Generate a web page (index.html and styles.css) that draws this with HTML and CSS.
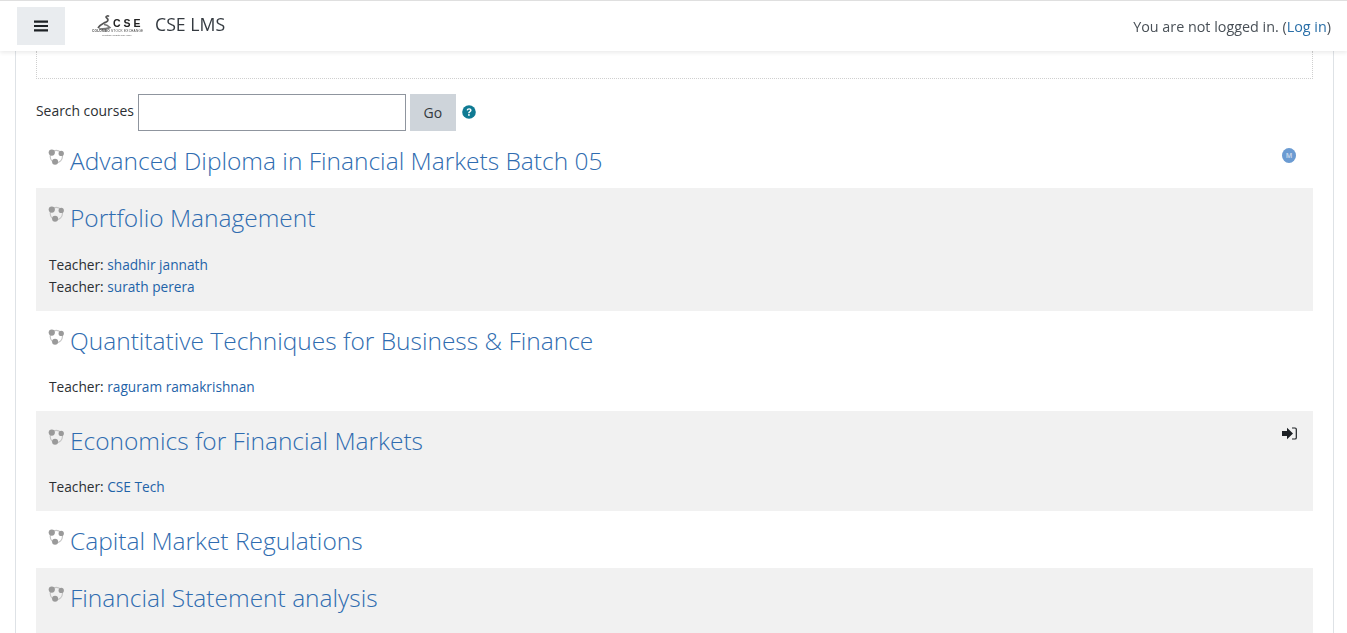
FILE: index.html
```html
<!DOCTYPE html>
<html lang="en">
<head>
<meta charset="utf-8">
<title>CSE LMS</title>
<link rel="stylesheet" href="styles.css">
</head>
<body>
<header class="navbar">
  <button class="menu-btn" aria-label="Menu">
    <svg width="14" height="12" viewBox="0 0 14 12"><path d="M0 0.500h14v2.200H0zM0 4.900h14v2.200H0zM0 9.300h14v2.200H0z" fill="#1d2125"/></svg>
  </button>
  <div class="brand">
    <div class="logo">
      <svg class="logo-mark" width="15" height="15" viewBox="0 0 15 15"><path d="M1 13c2-3 4-4 6-5 2-1 4-1 4-3S9 3 9 2s2-1.500 3-.5" fill="none" stroke="#555" stroke-width="1.700"/><path d="M2 14c3 0 8 0 11-1.500-2-2-4-3-6-3" fill="none" stroke="#777" stroke-width="1.500"/></svg>
      <span class="logo-cse">C S E</span>
      <span class="logo-sub"><b>COLOMBO</b> STOCK EXCHANGE</span>
      <span class="logo-tag">Creating Wealth and Value</span>
    </div>
    <span class="site-name">CSE LMS</span>
  </div>
  <div class="login-info">You are not logged in. (<a href="#">Log in</a>)</div>
</header>

<main class="page">
  <div class="dotted-box"></div>
  <form class="search">
    <label class="search-label">Search courses</label>
    <input class="search-input" type="text">
    <button class="go-btn" type="button">Go</button>
    <svg class="help" width="14" height="14" viewBox="0 0 14 14"><circle cx="7" cy="7" r="6.800" fill="#0f7a93"/><path d="M4.600 5.300C4.800 3.900 5.800 3.200 7.100 3.200c1.400 0 2.500.8 2.500 2 0 1.900-2 1.800-2 3.100H6.100c0-2 2-2 2-3 0-.5-.4-.8-1-.8-.6 0-1 .3-1.200 1z" fill="#fff"/><rect x="6.100" y="9.100" width="1.600" height="1.700" fill="#fff"/></svg>
  </form>

  <div class="courses">
    <article class="course">
      <div class="course-head">
        <h3 class="course-title"><svg class="cicon" viewBox="0 0 18 18"><use href="#ci"/></svg><a href="#">Advanced Diploma in Financial Markets Batch 05</a></h3>
        <span class="badge-m">M</span>
      </div>
    </article>
    <article class="course alt">
      <div class="course-head">
        <h3 class="course-title"><svg class="cicon" viewBox="0 0 18 18"><use href="#ci"/></svg><a href="#">Portfolio Management</a></h3>
      </div>
      <ul class="teachers multi">
        <li>Teacher: <a href="#">shadhir jannath</a></li>
        <li>Teacher: <a href="#">surath perera</a></li>
      </ul>
    </article>
    <article class="course">
      <div class="course-head">
        <h3 class="course-title"><svg class="cicon" viewBox="0 0 18 18"><use href="#ci"/></svg><a href="#">Quantitative Techniques for Business &amp; Finance</a></h3>
      </div>
      <ul class="teachers">
        <li>Teacher: <a href="#">raguram ramakrishnan</a></li>
      </ul>
    </article>
    <article class="course alt">
      <div class="course-head">
        <h3 class="course-title"><svg class="cicon" viewBox="0 0 18 18"><use href="#ci"/></svg><a href="#">Economics for Financial Markets</a></h3>
        <svg class="enrol" width="15" height="13" viewBox="0 0 15 13"><path d="M0 4h5V.8L11 6.500 5 12.200V9H0z" fill="#1d2125"/><path d="M10 1h3a1.300 1.300 0 0 1 1.300 1.300v8.400A1.300 1.300 0 0 1 13 12h-3" fill="none" stroke="#1d2125" stroke-width="1.200"/></svg>
      </div>
      <ul class="teachers">
        <li>Teacher: <a href="#">CSE Tech</a></li>
      </ul>
    </article>
    <article class="course">
      <div class="course-head">
        <h3 class="course-title"><svg class="cicon" viewBox="0 0 18 18"><use href="#ci"/></svg><a href="#">Capital Market Regulations</a></h3>
      </div>
    </article>
    <article class="course alt cut">
      <div class="course-head">
        <h3 class="course-title"><svg class="cicon" viewBox="0 0 18 18"><use href="#ci"/></svg><a href="#">Financial Statement analysis</a></h3>
      </div>
    </article>
  </div>
</main>

<svg class="defs" width="0" height="0" aria-hidden="true">
  <symbol id="ci" viewBox="0 0 18 18">
    <circle cx="8.800" cy="9" r="6.500" fill="none" stroke="#c4c4c4" stroke-width="1.200"/>
    <circle cx="4" cy="4.800" r="3.300" fill="#9a9a9a"/>
    <circle cx="14" cy="5.800" r="2.800" fill="#9a9a9a"/>
    <circle cx="7.500" cy="14.500" r="3.200" fill="#9a9a9a"/>
  </symbol>
</svg>
</body>
</html>
```
FILE: styles.css
```css
* { box-sizing: border-box; }
html, body { margin: 0; padding: 0; height: 100%; overflow: hidden; }
body {
  background: #fff;
  color: #2b2f33;
  font-family: "Open Sans", "Noto Sans", sans-serif;
  font-size: 13.700px;
}
a { color: #1f63a8; text-decoration: none; }

.navbar {
  position: fixed;
  top: 0; left: 0; right: 0;
  height: 51px;
  background: #fff;
  border-top: 1px solid #dfdfdf;
  box-shadow: 0 2px 4px rgba(0,0,0,.08);
  display: flex;
  align-items: center;
  padding: 0 16px 0 17px;
  z-index: 10;
}
.menu-btn {
  width: 48px; height: 38px;
  background: #e9ecef;
  border: 0;
  margin: 0;
  padding: 0;
  display: flex;
  align-items: center;
  justify-content: center;
}
.brand { display: flex; align-items: center; margin-left: 26px; }
.logo {
  position: relative;
  width: 52px; height: 26px;
  margin-right: 12px;
  filter: blur(.3px);
}
.logo-mark { position: absolute; left: 6px; top: 2px; }
.logo-cse {
  position: absolute; left: 22px; top: 5px;
  font: 700 10.500px/10px "Liberation Sans", sans-serif;
  color: #222;
  white-space: nowrap;
}
.logo-sub {
  position: absolute; left: 1px; top: 16px;
  font: 3.150px/4px "Liberation Sans", sans-serif;
  color: #444;
  white-space: nowrap;
  letter-spacing: .22px;
}
.logo-tag {
  position: absolute; left: 11px; top: 21px;
  font: 2.500px/3px "Liberation Sans", sans-serif;
  color: #555;
  white-space: nowrap;
}
.site-name { font-size: 17.700px; color: #343a40; margin-top: -4px; }
.login-info { margin-left: auto; font-size: 14.350px; color: #495057; margin-top: 1px; }
.login-info a { color: #2a6fa8; }

.page {
  margin: 0 13px 0 15px;
  height: 100%;
  border-left: 1px solid #dee2e6;
  border-right: 1px solid #dee2e6;
  padding: 51px 20px 0 20px;
}
.dotted-box {
  height: 28px;
  border: 1px dotted #cfcfcf;
  border-top: 0;
}
.search {
  display: flex;
  align-items: center;
  margin-top: 14px;
  height: 38px;
}
.search-label { font-size: 13.900px; margin-right: 4px; margin-top: -4px; }
.search-input {
  width: 268px; height: 37px;
  border: 1px solid #8f959e;
  background: #fff;
  padding: 0;
}
.go-btn {
  width: 46px; height: 37px;
  margin-left: 4px;
  background: #ced4da;
  border: 0;
  font: 14px "Open Sans", sans-serif;
  color: #343a40;
}
.help { margin-left: 6px; }

.course { padding: 13px 13px 0; }
.course.alt { background: #f1f1f1; }
.course.cut { padding-bottom: 30px; }
.course-head { display: flex; justify-content: space-between; height: 44px; }
.course-title {
  margin: 0;
  font-size: 24.500px;
  font-weight: 300;
  line-height: 33px;
  display: flex;
  align-items: flex-start;
}
.course-title a { color: #2f6cb0; }
.cicon { width: 17px; height: 17px; margin: 4px 5px 0 -1px; flex: none; }
.badge-m {
  width: 14px; height: 15px;
  border-radius: 50%;
  background: #6b9bd2;
  color: #c3d5ea;
  font-size: 7px;
  font-weight: 700;
  line-height: 15px;
  text-align: center;
  margin: 4px 4px 0 0;
}
.enrol { margin: 3px 3px 0 0; }
.teachers { list-style: none; margin: 0; padding: 8px 0 13px; line-height: 22px; }
.teachers.multi { padding: 9px 0 13px; }
.defs { position: absolute; }
```
